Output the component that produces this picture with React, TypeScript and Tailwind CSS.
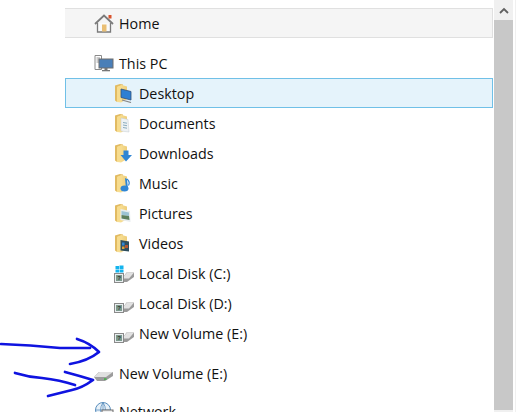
import React from "react";

const Folder = ({ children }: { children?: React.ReactNode }) => (
  <svg width="20" height="20" viewBox="0 0 20 20" className="shrink-0">
    <defs>
      <linearGradient id="fg" x1="0" y1="0" x2="1" y2="0">
        <stop offset="0" stopColor="#f9e7a6" />
        <stop offset="1" stopColor="#efcd78" />
      </linearGradient>
    </defs>
    <path d="M1 2.5 L6 1 L9 1.5 L9 16 L3 19 L1 17.5 Z" fill="#e2bb62" />
    <path d="M3 4 L8 2 L13 3.5 L13 16 L7 19.5 L3 19 Z" fill="url(#fg)" />
    <path d="M3 4 L8 2 L8 18 L3 19 Z" fill="#f7dc8e" />
    {children}
  </svg>
);

const DiskBody = () => (
  <>
    <path d="M8 16 L12.5 9.5 L20 9.5 L20 14 L13 19 L8 19 Z" fill="#9a9a9a" />
    <path d="M8 15.5 L13 9.5 L20 9.5 L15 15.5 Z" fill="#e2e2e2" />
  </>
);

const Drive = ({ win = false }: { win?: boolean }) => (
  <svg width="20" height="20" viewBox="0 0 20 20" className="shrink-0">
    {win && (
      <g fill="#14b4ee">
        <rect x="1.5" y="3" width="3.5" height="3.5" />
        <rect x="5.5" y="2.5" width="4" height="4" />
        <rect x="1.5" y="7" width="3.5" height="2.5" />
        <rect x="5.5" y="7" width="4" height="2.5" />
      </g>
    )}
    <DiskBody />
    <rect x="0.5" y="10.5" width="9" height="9" fill="#e9eef0" stroke="#8a8a8a" />
    <rect x="2" y="12" width="6" height="6" fill="#7d9a8d" />
    <text x="5" y="17.4" fontSize="6" fontWeight="700" textAnchor="middle" fill="#2e2e2e" fontFamily="Liberation Sans, sans-serif">?</text>
  </svg>
);

const overlays: Record<string, React.ReactNode> = {
  Desktop: (
    <>
      <path d="M7 6 L17 8.5 L17 17 L7 14.5 Z" fill="#2d7fd3" stroke="#31507a" strokeWidth="0.8" />
      <path d="M8 17 L17 19.5" stroke="#888" strokeWidth="1.2" />
    </>
  ),
  Documents: (
    <>
      <path d="M7 5 L14 6.5 L15 19 L7 18 Z" fill="#eef2f4" stroke="#c5cbd0" strokeWidth="0.5" />
      <path d="M9 9.5 L13 10.2 M9 12 L13 12.7 M9 14.5 L13 15.2" stroke="#7fa4b8" strokeWidth="0.9" />
    </>
  ),
  Downloads: <path d="M9.5 7.5 L14.5 7.5 L14.5 12 L18 12 L12 18.5 L6.5 12 L9.5 12 Z" fill="#2f86d4" />,
  Music: (
    <>
      <path d="M11 5 L13 6 L14 16 L12 16 Z" fill="#2f86d4" />
      <ellipse cx="10.5" cy="15.5" rx="4" ry="3" fill="#2f86d4" />
      <path d="M13 6 Q16.5 9 14.5 12.5" stroke="#2f86d4" strokeWidth="1.2" fill="none" />
    </>
  ),
  Pictures: (
    <>
      <path d="M6.5 6 L16 8 L16.5 19 L6.5 17 Z" fill="#e8edef" />
      <path d="M7.5 8 L15 9.5 L15 13 L7.5 12 Z" fill="#9cc3d4" />
      <path d="M7.5 12 L15 13 L15.5 17 L7.5 15.5 Z" fill="#5c7f5d" />
    </>
  ),
  Videos: (
    <>
      <path d="M6.5 7 L15 8.5 L15 18.5 L6.5 17.5 Z" fill="#2d4e5e" />
      <rect x="8" y="9.5" width="2.5" height="3" fill="#2f86d4" />
      <rect x="11" y="12" width="3" height="3" fill="#b4552f" />
      <rect x="8" y="13.5" width="2.5" height="2.5" fill="#d9a23a" />
    </>
  ),
};

const Row = ({ label, icon, selected = false }: { label: string; icon: React.ReactNode; selected?: boolean }) => (
  <div
    className={
      selected
        ? "h-[30px] shrink-0 flex items-center pl-[48px] gap-[5px] bg-[#e5f3fb] border border-[#70c0e7]"
        : "h-[30px] shrink-0 flex items-center pl-[49px] gap-[5px]"
    }
  >
    {icon}
    <span className="pt-[2px]">{label}</span>
  </div>
);

export default function App() {
  return (
    <div
      className="relative h-[412px] w-[525px] overflow-hidden bg-white flex text-[14.3px] text-[#111111]"
      style={{ fontFamily: '"Open Sans", "Noto Sans", sans-serif' }}
    >
      <div className="w-[65px] shrink-0" />
      <div className="w-[428px] shrink-0 flex flex-col">
        <div className="h-[8px] shrink-0" />
        <div className="h-[30px] shrink-0 flex items-center pl-[29px] gap-[5px] bg-[#f5f5f5] border-y border-r border-[#e0e0e0]">
          <svg width="20" height="20" viewBox="0 0 20 20" className="shrink-0">
            <path d="M1 11 L10 2.5 L19 11" fill="none" stroke="#7a7a7a" strokeWidth="1.8" />
            <path d="M3.5 10 L3.5 19 L16.5 19 L16.5 10" fill="#fafafa" stroke="#7a7a7a" strokeWidth="1.3" />
            <rect x="8" y="11.5" width="4.5" height="7" fill="#eabf75" />
            <rect x="14.5" y="2" width="3" height="3.5" fill="#d9532c" />
          </svg>
          <span className="pt-[2px]">Home</span>
        </div>
        <div className="h-[10px] shrink-0" />
        <div className="h-[30px] shrink-0 flex items-center pl-[29px] gap-[5px]">
          <svg width="20" height="20" viewBox="0 0 20 20" className="shrink-0">
            <path d="M1 2.5 H7.5 V16.5 H1 Z" fill="#fff" stroke="#8a8a8a" />
            <path d="M2.5 5 H6 M2.5 7 H6 M2.5 9 H6" stroke="#999" />
            <rect x="5" y="6" width="14" height="9" fill="#4a7fb8" stroke="#6d6d6d" />
            <rect x="10.5" y="15" width="3" height="2" fill="#777" />
            <rect x="8" y="17" width="8" height="1.3" fill="#777" />
          </svg>
          <span className="pt-[2px]">This PC</span>
        </div>
        <Row selected label="Desktop" icon={<Folder>{overlays.Desktop}</Folder>} />
        <Row label="Documents" icon={<Folder>{overlays.Documents}</Folder>} />
        <Row label="Downloads" icon={<Folder>{overlays.Downloads}</Folder>} />
        <Row label="Music" icon={<Folder>{overlays.Music}</Folder>} />
        <Row label="Pictures" icon={<Folder>{overlays.Pictures}</Folder>} />
        <Row label="Videos" icon={<Folder>{overlays.Videos}</Folder>} />
        <Row label="Local Disk (C:)" icon={<Drive win />} />
        <Row label="Local Disk (D:)" icon={<Drive />} />
        <Row label="New Volume (E:)" icon={<Drive />} />
        <div className="h-[10px] shrink-0" />
        <div className="h-[30px] shrink-0 flex items-center pl-[29px] gap-[5px]">
          <svg width="20" height="20" viewBox="0 0 20 20" className="shrink-0">
            <path d="M0 14 L5 9 L19 9 L19 13 L11 18 L3 18 Z" fill="#9c9c9c" />
            <path d="M0 14 L5.5 9 L19 9 L12 14 Z" fill="#e0e0e0" />
            <rect x="10" y="15.2" width="2.5" height="1.8" fill="#4caf50" />
          </svg>
          <span className="pt-[2px]">New Volume (E:)</span>
        </div>
        <div className="h-[8px] shrink-0" />
        <div className="h-[30px] shrink-0 flex items-center pl-[29px] gap-[5px]">
          <svg width="20" height="20" viewBox="0 0 20 20" className="shrink-0">
            <circle cx="9" cy="9" r="7.5" fill="#e8f1f8" stroke="#5a8fbe" />
            <path d="M9 1.5 V16.5 M1.5 9 H16.5 M9 1.5 Q4 9 9 16.5 M9 1.5 Q14 9 9 16.5" stroke="#5a8fbe" fill="none" strokeWidth="0.8" />
            <rect x="8" y="9" width="11" height="8" fill="#f0f0f0" stroke="#6d6d6d" />
          </svg>
          <span className="pt-[2px]">Network</span>
        </div>
      </div>
      <div className="w-px shrink-0" />
      <div className="w-[19px] shrink-0 flex flex-col bg-[#f0f0f0]">
        <div className="h-[20px] shrink-0 flex items-center justify-center">
          <svg width="10" height="7" viewBox="0 0 10 7">
            <path d="M1 6 L5 2 L9 6" fill="none" stroke="#606060" strokeWidth="1.8" />
          </svg>
        </div>
        <div className="h-[390px] shrink-0 bg-[#c8c8c8]" />
      </div>
      <div className="w-[2px] shrink-0" />
      <div className="w-px shrink-0 bg-[#f0f0f0]" />

      <svg className="absolute left-0 top-0 pointer-events-none" width="110" height="412" viewBox="0 0 110 412">
        <g fill="none" stroke="#0f13e0" strokeWidth="2.7" strokeLinecap="round" strokeLinejoin="round">
          <path d="M1 344 Q30 345 60 348 L90 348" />
          <path d="M77 339 Q90 343 99 352 Q88 361 70 364" />
          <path d="M15 373 Q28 377 42 378 Q60 380 75 385" />
          <path d="M65 372 Q80 376 93 380 Q82 388 72 390 L48 396" />
        </g>
      </svg>
    </div>
  );
}
